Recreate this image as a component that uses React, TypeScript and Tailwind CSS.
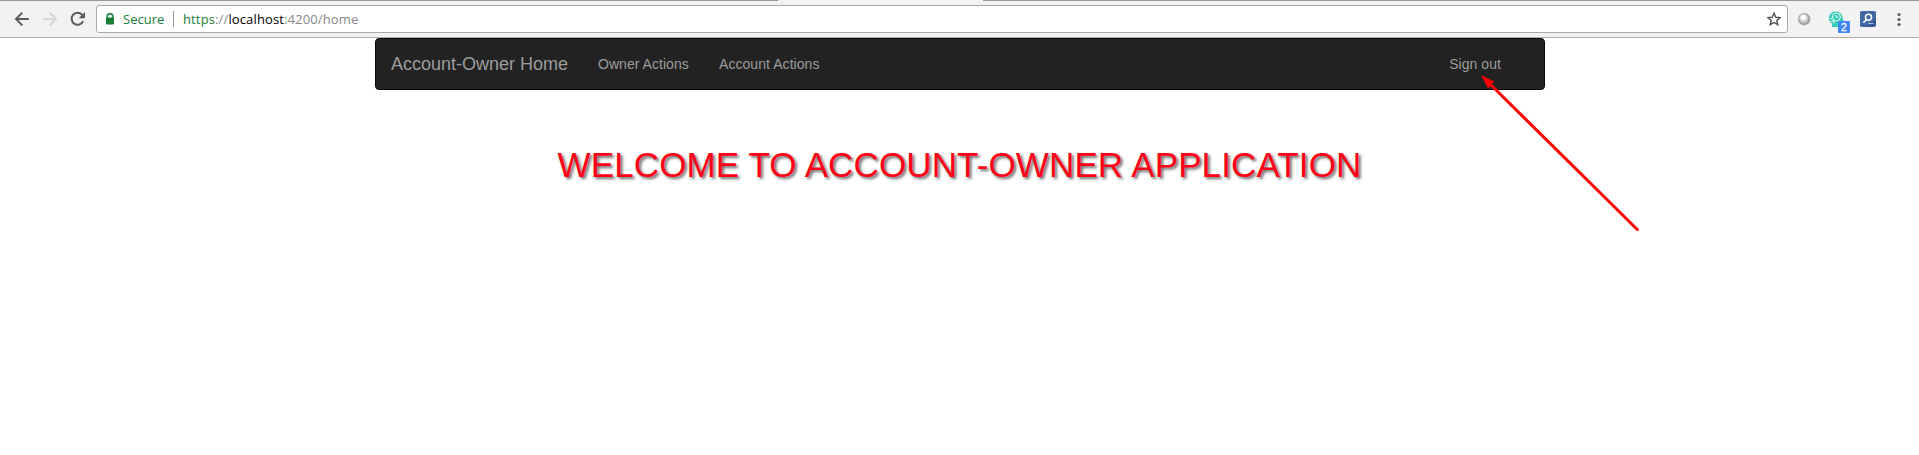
import React from "react";

function BackIcon({ className }: { className: string }) {
  return (
    <svg className={className} width="16" height="16" viewBox="0 0 16 16" fill="none" stroke="currentColor" strokeWidth="2">
      <path d="M14.8 8H2.5M8.3 1.6L2 8l6.3 6.4" />
    </svg>
  );
}

function Toolbar() {
  return (
    <div className="flex h-[38px] w-full items-start border-b border-[#b0b0b0] bg-[#f2f2f2]">
      <div className="flex h-full w-full flex-col">
        <div className="flex h-px w-full shrink-0">
          <div className="w-[778px] bg-[#999799]" />
          <div className="w-[205px] bg-[#f2f2f2]" />
          <div className="flex-1 bg-[#999799]" />
        </div>
        <div className="flex pt-1">
          <div className="flex w-[96px] shrink-0 pt-1.5 pl-3.5">
            <BackIcon className="text-[#5a5a5e]" />
            <BackIcon className="ml-3 rotate-180 text-[#d4d4d4]" />
            <svg className="ml-3" width="16" height="16" viewBox="0 0 16 16">
              <path d="M13.1 10.2A6 6 0 1 1 12.1 3.8L13.5 5.2" fill="none" stroke="#5a5a5e" strokeWidth="2" />
              <path d="M15 1v6.3H8.7z" fill="#5a5a5e" />
            </svg>
          </div>
          <div className="flex h-7 w-[1692px] shrink-0 items-center rounded-[3px] border border-[#a9a9a9] bg-white pr-1.5 pl-2 font-['Open_Sans','Noto_Sans',sans-serif] text-[13px] leading-[18px] whitespace-nowrap">
            <svg width="10" height="12" viewBox="0 0 10 12" className="mr-2">
              <path d="M2.2 5V3a2.7 2.2 0 0 1 5.6 0v2" fill="none" stroke="#188038" strokeWidth="1.5" />
              <rect x="1" y="4.5" width="8" height="7" rx=".7" fill="#188038" />
            </svg>
            <span className="w-[50px] text-[#188038]">Secure</span>
            <span className="mr-[9px] h-4 w-px bg-[#999]" />
            <span className="tracking-[0.13px] text-[#85878a]">
              <span className="text-[#188038]">https</span>://<span className="text-black">localhost</span>:4200/home
            </span>
            <svg className="ml-auto" width="14" height="14" viewBox="0 0 14 14">
              <path d="M7 1.2l1.7 4 4.4.4-3.3 2.9 1 4.2L7 10.5l-3.8 2.2 1-4.2L.9 5.6l4.4-.4z" fill="none" stroke="#4d4d50" strokeWidth="1.4" />
            </svg>
          </div>
          <div className="flex flex-1 pt-1.5">
            <svg className="ml-[9px]" width="15" height="16" viewBox="0 0 15 16">
              <circle cx="7.2" cy="8.2" r="6.2" fill="#a4a4a4" />
              <circle cx="6.7" cy="7.4" r="4.5" fill="#d1d1d1" />
              <circle cx="6.2" cy="6.4" r="2.7" fill="#fff" />
            </svg>
            <svg className="ml-4 overflow-visible" width="24" height="24" viewBox="0 0 24 24">
              <path d="M4 16v-3.6C1.7 11 1 9.2 1 7a6.8 6.3 0 0 1 13.6-.3l1 3.1-1.5.5v3H11V16z" fill="#35cbb7" />
              <circle cx="8.4" cy="6" r="4" fill="none" stroke="#e6faf7" strokeWidth="1" />
              <path d="M8.2 3.8v2.4h2.4M2 7.5h2M3 10h3v2.5" fill="none" stroke="#e6faf7" strokeWidth="1" />
              <rect x="10" y="10" width="12" height="12" rx="1" fill="#4285f4" />
              <text x="16" y="19.8" textAnchor="middle" fill="white" stroke="white" strokeWidth="0.3" fontFamily="Liberation Sans" fontSize="10.5">2</text>
            </svg>
            <svg className="ml-2" width="16" height="16" viewBox="0 0 16 16">
              <rect width="16" height="16" rx="2.5" fill="#365795" />
              <path d="M0 2.5A2.5 2.5 0 0 1 2.5 0h11A2.5 2.5 0 0 1 16 2.5V7L7 16H2.5A2.5 2.5 0 0 1 0 13.5z" fill="#4267a8" />
              <circle cx="8.5" cy="6.3" r="3" fill="none" stroke="white" strokeWidth="1.5" />
              <path d="M6.2 8.8L3.4 11.6" stroke="white" strokeWidth="1.8" />
              <path d="M8 12.5h5.5" stroke="#a8b9d8" />
            </svg>
            <svg className="ml-[21px]" width="4" height="16" viewBox="0 0 4 16" fill="#5a5a5e">
              <circle cx="2" cy="3.5" r="1.6" />
              <circle cx="2" cy="8.5" r="1.6" />
              <circle cx="2" cy="13.5" r="1.6" />
            </svg>
          </div>
        </div>
      </div>
    </div>
  );
}

function Arrow() {
  return (
    <svg className="pointer-events-none absolute top-[70px] left-[1475px]" width="170" height="166" viewBox="0 0 170 166">
      <path d="M15 14L163.3 160.5" stroke="#f00" strokeWidth="3" />
      <path d="M6 5l13.3 6.6-6.2 6.8z" fill="#f00" />
    </svg>
  );
}

export default function App() {
  return (
    <div className="relative h-[455px] overflow-hidden bg-white font-['Liberation_Sans',Arial,sans-serif]">
      <Toolbar />
      <nav className="ml-[375px] flex h-[52px] w-[1170px] items-center rounded border border-[#080808] bg-[#222] pr-[43px] pl-[15px] text-sm text-[#9d9d9d]">
        <a className="w-[207px] text-lg leading-5">Account-Owner Home</a>
        <a className="w-[121px] tracking-[0.04px]">Owner Actions</a>
        <a className="tracking-[0.06px]">Account Actions</a>
        <a className="ml-auto tracking-[0.06px]">Sign out</a>
      </nav>
      <h1 className="pt-[55px] text-center text-[35px] leading-[40px] tracking-[0.13px] text-[#ff0018] [text-shadow:2px_2px_3px_#666]">
        WELCOME TO ACCOUNT-OWNER APPLICATION
      </h1>
      <Arrow />
    </div>
  );
}
